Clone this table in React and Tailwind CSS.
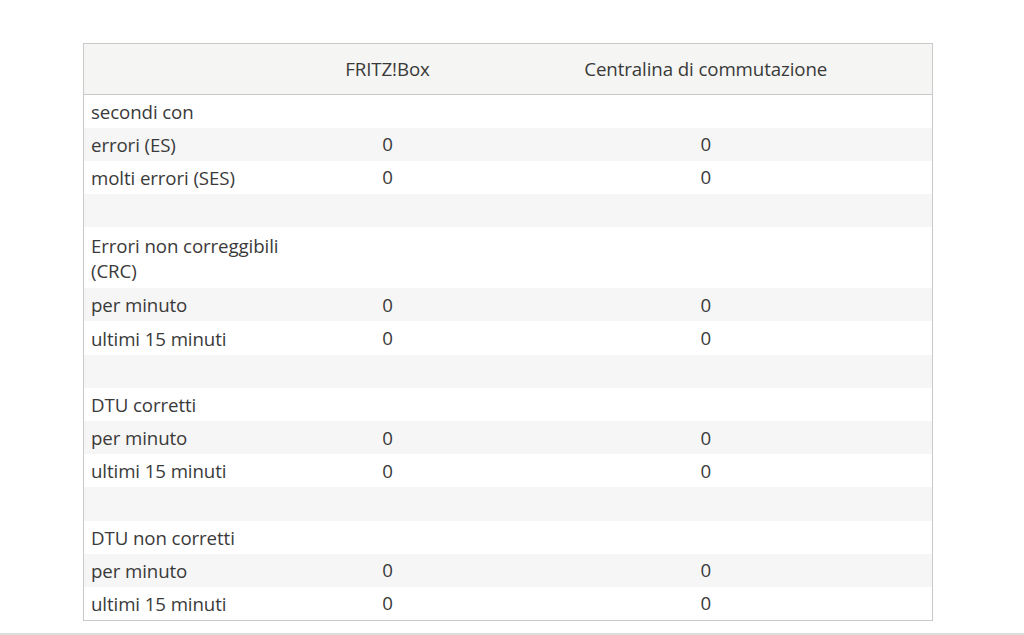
export default function App() {
  const rows = [
    { l: "secondi con" },
    { l: "errori (ES)", a: "0", b: "0" },
    { l: "molti errori (SES)", a: "0", b: "0" },
    { l: "" },
    { l: "Errori non correggibili (CRC)", tall: true },
    { l: "per minuto", a: "0", b: "0" },
    { l: "ultimi 15 minuti", a: "0", b: "0" },
    { l: "" },
    { l: "DTU corretti" },
    { l: "per minuto", a: "0", b: "0" },
    { l: "ultimi 15 minuti", a: "0", b: "0" },
    { l: "" },
    { l: "DTU non corretti" },
    { l: "per minuto", a: "0", b: "0" },
    { l: "ultimi 15 minuti", a: "0", b: "0" },
  ];
  return (
    <div className="w-[1024px] h-[635px] bg-white overflow-hidden text-[#3a3a3a]" style={{ fontFamily: "'Open Sans', 'Liberation Sans', sans-serif" }}>
      <div className="pt-[43px] pl-[83px]">
        <table className="w-[849px] border border-[#c9c9c9] border-collapse table-fixed text-[18.7px] tracking-[-0.1px]">
          <colgroup>
            <col className="w-[212px]" />
            <col className="w-[184px]" />
            <col className="w-[453px]" />
          </colgroup>
          <thead>
            <tr className="bg-[#f5f5f3] h-[51px] border-b border-[#c9c9c9]">
              <th className="font-normal"></th>
              <th className="font-normal text-center">FRITZ!Box</th>
              <th className="font-normal text-center">Centralina di commutazione</th>
            </tr>
          </thead>
          <tbody>
            {rows.map((r, i) => (
              <tr key={i} className={i % 2 === 1 ? "bg-[#f6f6f6]" : "bg-white"}>
                <td className={(r.tall ? "h-[61px] leading-[25px] " : "h-[33.2px] leading-[25px] ") + "pl-[7px] pr-[2px] align-middle"}>{r.l}</td>
                <td className="text-center align-middle">{r.a || ""}</td>
                <td className="text-center align-middle">{r.b || ""}</td>
              </tr>
            ))}
          </tbody>
        </table>
      </div>
      <div className="mt-[12px] border-t-2 border-[#dcdcdc]"></div>
    </div>
  );
}
